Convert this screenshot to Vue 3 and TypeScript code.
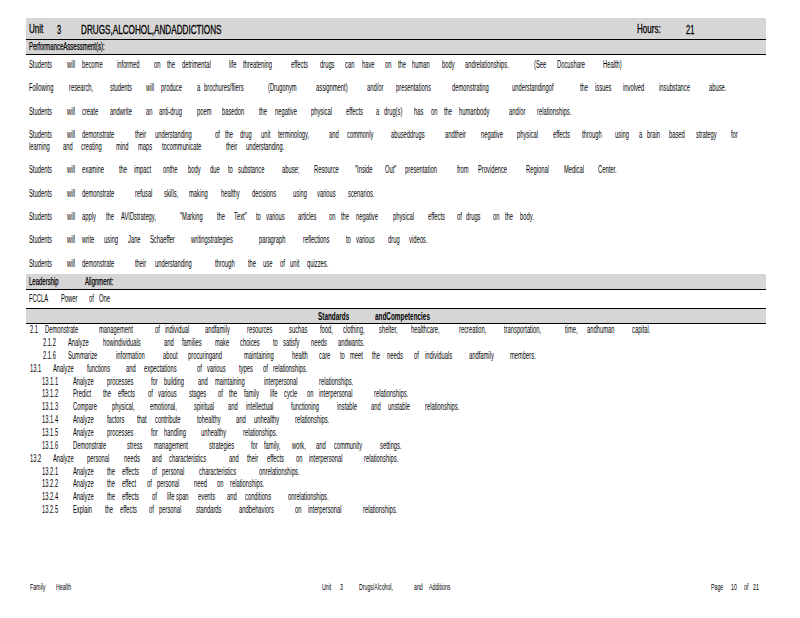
<script setup lang="ts">
interface Word { text: string; width: number | null }
interface Row { left: number; words: Word[] }

const ORIGIN = 26

function parse(spec: string): Row {
  const items = spec.trim().split(/\s+/).map((item) => {
    const at = item.lastIndexOf('@')
    return { text: item.slice(0, at), x: Number(item.slice(at + 1)) }
  })
  return {
    left: items[0].x - ORIGIN,
    words: items.map((it, i) => ({
      text: it.text,
      width: i + 1 < items.length ? items[i + 1].x - it.x : null,
    })),
  }
}

const header = parse('Unit@29 3@57 DRUGS,ALCOHOL,ANDADDICTIONS@81 Hours:@637 21@686')
const assessmentTitle = parse('PerformanceAssessment(s):@29')

const paragraphs: Row[][] = [
  ['Students@29 will@67 become@82 informed@117 on@154 the@167 detrimental@182 life@229 threatening@243 effects@291 drugs@320 can@345 have@362 on@385 the@398 human@412 body@442 andrelationships.@465 (See@534 Docushare@557 Health)@603'],
  ['Following@29 research,@69 students@110 will@146 produce@161 a@197 brochures/fliers@204 (Drugonym@268 assignment)@316 and/or@367 presentations@396 demonstrating@452 understandingof@512 the@580 issues@595 involved@623 insubstance@659 abuse.@709'],
  ['Students@29 will@67 create@82 andwrite@110 an@146 anti-drug@159 poem@197 basedon@222 the@259 negative@275 physical@311 effects@346 a@376 drug(s)@384 has@414 on@431 the@444 humanbody@459 and/or@509 relationships.@537'],
  [
    'Students@29 will@67 demonstrate@82 their@135 understanding@155 of@215 the@225 drug@240 unit@261 terminology,@278 and@329 commonly@347 abuseddrugs@391 andtheir@445 negative@481 physical@517 effects@553 through@582 using@615 a@639 brain@647 based@669 strategy@696 for@731',
    'learning@29 and@63 creating@81 mind@116 maps@138 tocommunicate@162 their@226 understanding.@246',
  ],
  ['Students@29 will@67 examine@82 the@119 impact@134 onthe@163 body@188 due@210 to@228 substance@238 abuse;@282 Resource@314 "Inside@355 Out"@385 presentation@405 from@457 Providence@478 Regional@526 Medical@564 Center.@598'],
  ['Students@29 will@67 demonstrate@82 refusal@135 skills,@164 making@189 healthy@221 decisions@252 using@293 various@317 scenarios.@348'],
  ['Students@29 will@67 apply@82 the@106 AVIDstrategy,@121 "Marking@180 the@217 Text"@234 to@256 various@266 articles@298 on@329 the@341 negative@356 physical@393 effects@428 of@457 drugs@466 on@493 the@505 body.@520'],
  ['Students@29 will@67 write@82 using@104 Jane@128 Schaeffer@150 writingstrategies@191 paragraph@259 reflections@303 to@346 various@356 drug@388 videos.@409'],
  ['Students@29 will@67 demonstrate@82 their@135 understanding@155 through@215 the@248 use@263 of@280 unit@290 quizzes.@307'],
].map((p) => p.map(parse))

const leadership = parse('Leadership@29 Alignment:@85')
const fccla = parse('FCCLA@29 Power@61 of@89 One@99')
const standardsTitle = parse('Standards@318 andCompetencies@375')

const standards: Row[] = [
  '2.1@30 Demonstrate@45 management@99 of@155 individual@165 andfamily@205 resources@247 suchas@289 food,@320 clothing,@343 shelter,@379 healthcare,@411 recreation,@459 transportation,@504 time,@565 andhuman@587 capital.@632',
  '2.1.2@43 Analyze@68 howindividuals@103 and@164 families@182 make@215 choices@240 to@273 satisfy@283 needs@311 andwants.@338',
  '2.1.6@43 Summarize@68 information@116 about@163 procuringand@188 maintaining@244 health@292 care@319 to@340 meet@350 the@372 needs@387 of@414 individuals@425 andfamily@469 members.@510',
  '13.1@30 Analyze@53 functions@87 and@126 expectations@144 of@197 various@207 types@239 of@263 relationships.@273',
  '13.1.1@42 Analyze@73 processes@107 for@151 building@164 and@198 maintaining@215 interpersonal@264 relationships.@319',
  '13.1.2@42 Predict@73 the@103 effects@118 of@148 various@158 stages@189 of@218 the@229 family@244 life@270 cycle@284 on@307 interpersonal@319 relationships.@374',
  '13.1.3@42 Compare@73 physical,@112 emotional,@150 spiritual@194 and@228 intellectual@246 functioning@291 instable@337 and@371 unstable@388 relationships.@425',
  '13.1.4@42 Analyze@73 factors@107 that@137 contribute@155 tohealthy@197 and@236 unhealthy@254 relationships.@295',
  '13.1.5@42 Analyze@73 processes@107 for@151 handling@164 unhealthy@201 relationships.@243',
  '13.1.6@42 Demonstrate@73 stress@127 management@154 strategies@209 for@251 family,@264 work,@292 and@316 community@334 settings.@380',
  '13.2@30 Analyze@53 personal@87 needs@124 and@152 characteristics@169 and@229 their@247 effects@267 on@296 interpersonal@309 relationships.@364',
  '13.2.1@42 Analyze@73 the@107 effects@122 of@152 personal@162 characteristics@199 onrelationships.@259',
  '13.2.2@42 Analyze@73 the@107 effect@122 of@147 personal@157 need@194 on@217 relationships.@230',
  '13.2.4@42 Analyze@73 the@107 effects@122 of@152 life@167 span@176 events@198 and@227 conditions@245 onrelationships.@288',
  '13.2.5@42 Explain@73 the@105 effects@120 of@149 personal@159 standards@196 andbehaviors@239 on@295 interpersonal@308 relationships.@363',
].map(parse)

const footer = parse('Family@30 Health@56 Unit@322 3@340 Drugs/Alcohol,@359 and@414 Additions@429 Page@711 10@731 of@744 21@753')

const wordStyle = (w: Word) => (w.width === null ? {} : { width: `${w.width}px` })
const rowStyle = (r: Row) => ({ paddingLeft: `${r.left}px` })
</script>

<template>
  <main class="sheet">
    <header class="bar bar-head row head" :style="rowStyle(header)">
      <span v-for="w in header.words" :key="w.text" class="word" :style="wordStyle(w)"><span class="ink">{{ w.text }}</span></span>
    </header>

    <div class="bar bar-sub row" :style="rowStyle(assessmentTitle)">
      <span v-for="w in assessmentTitle.words" :key="w.text" class="word"><span class="ink strong">{{ w.text }}</span></span>
    </div>

    <section class="assessments">
      <div v-for="(para, p) in paragraphs" :key="p" class="para">
        <div v-for="(row, r) in para" :key="r" class="row" :style="rowStyle(row)">
          <span v-for="(w, i) in row.words" :key="i" class="word" :style="wordStyle(w)"><span class="ink">{{ w.text }}</span></span>
        </div>
      </div>
    </section>

    <div class="bar bar-lead row" :style="rowStyle(leadership)">
      <span v-for="w in leadership.words" :key="w.text" class="word" :style="wordStyle(w)"><span class="ink strong">{{ w.text }}</span></span>
    </div>

    <div class="fccla row" :style="rowStyle(fccla)">
      <span v-for="w in fccla.words" :key="w.text" class="word" :style="wordStyle(w)"><span class="ink">{{ w.text }}</span></span>
    </div>

    <div class="bar bar-std row std" :style="rowStyle(standardsTitle)">
      <span v-for="w in standardsTitle.words" :key="w.text" class="word" :style="wordStyle(w)"><span class="ink">{{ w.text }}</span></span>
    </div>

    <section class="standards">
      <div v-for="(row, r) in standards" :key="r" class="row std-row" :style="rowStyle(row)">
        <span v-for="(w, i) in row.words" :key="i" class="word" :style="wordStyle(w)"><span class="ink">{{ w.text }}</span></span>
      </div>
    </section>

    <footer class="foot row" :style="rowStyle(footer)">
      <span v-for="(w, i) in footer.words" :key="i" class="word" :style="wordStyle(w)"><span class="ink">{{ w.text }}</span></span>
    </footer>
  </main>
</template>

<style scoped>
.sheet {
  box-sizing: border-box;
  width: 800px;
  height: 618px;
  padding: 18px 34px 0 26px;
  overflow: hidden;
  background: #fff;
  color: #000;
  font-family: "Liberation Sans", Arial, sans-serif;
  font-size: 10px;
}
.row {
  display: flex;
  align-items: center;
  height: 12px;
  line-height: 12px;
  white-space: nowrap;
}
.word {
  display: block;
  flex: none;
}
.ink {
  display: inline-block;
  transform: scaleX(0.58);
  transform-origin: left center;
}
.strong {
  font-weight: normal;
  -webkit-text-stroke: 0.25px #000;
  transform: scaleX(0.6);
}
.bar {
  background: #d6d6d6;
  border-bottom: 1px solid #000;
}
.bar-head { height: 21px; }
.head { font-size: 13px; }
.head .ink {
  transform: scaleX(0.62);
  -webkit-text-stroke: 0.3px #000;
}
.head .word:nth-child(2),
.head .word:nth-child(3),
.head .word:nth-child(5) {
  margin-top: 2px;
  font-size: 12px;
}
.head .word:nth-child(3) .ink { transform: scaleX(0.68); }
.bar-sub { height: 14px; }
.assessments { padding-top: 4px; }
.para { margin-bottom: 11.35px; }
.para:last-child { margin-bottom: 4.4px; }
.bar-lead { height: 15px; }
.fccla { height: 18px; }
.bar-std {
  height: 14px;
  border-top: 1px solid #000;
  font-size: 11px;
  font-weight: bold;
}
.standards { margin-top: -0.3px; }
.std-row { height: 12.85px; }
.foot {
  margin-top: 64.5px;
  font-size: 9px;
}
</style>
